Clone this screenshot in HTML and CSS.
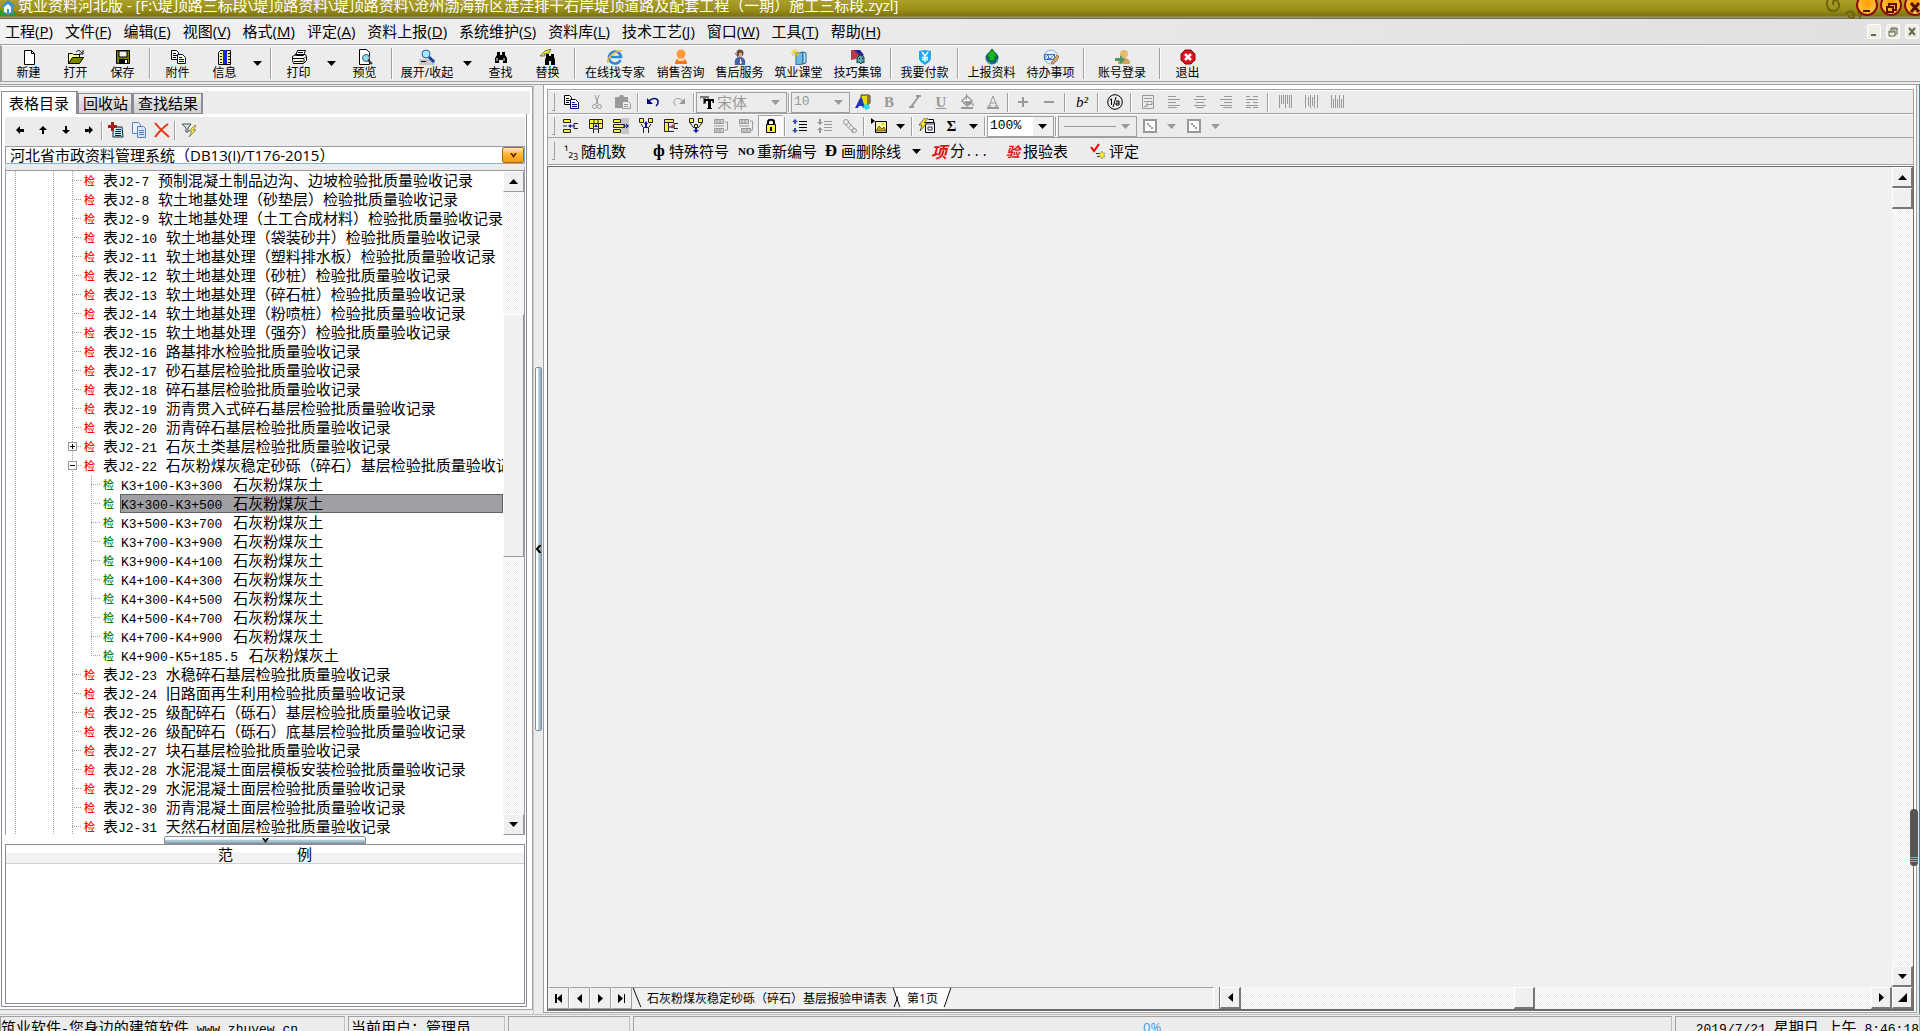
FILE: index.html
```html
<!DOCTYPE html>
<html lang="zh-CN">
<head>
<meta charset="utf-8">
<title>筑业资料河北版</title>
<link rel="stylesheet" href="styles.css">
</head>
<body>
<svg class="defs" aria-hidden="true">
  <symbol id="down" viewBox="0 0 9 5"><path d="M0 0h9L4.500 5z"/></symbol>
  <symbol id="up" viewBox="0 0 9 5"><path d="M0 5h9L4.500 0z"/></symbol>
  <symbol id="left" viewBox="0 0 5 9"><path d="M5 0v9L0 4.500z"/></symbol>
  <symbol id="right" viewBox="0 0 5 9"><path d="M0 0v9L5 4.500z"/></symbol>
  <symbol id="pages" viewBox="0 0 16 16"><path d="M1.500 1.500h5l2 2v7h-7z" fill="#fff" stroke="#000"/><path d="M3 4.500h3M3 6.500h4M3 8.500h3" stroke="#000"/><path d="M7.500 5.500h5l3 3v6h-8z" fill="#fff" stroke="#00007f"/><path d="M9 8.500h3M9 10.500h5M9 12.500h5" stroke="#00007f"/></symbol>
  <symbol id="pane" viewBox="0 0 16 16"><path d="M2 2h12v12H2z" fill="#fff" stroke="#999" stroke-width="2"/><path d="M5 5h2v2h2v2h2v2H9V9H7V7H5z" fill="#999"/></symbol>
</svg>

<header class="title">
  <svg class="logo" viewBox="0 0 16 16"><path d="M0 9l8 7 8-5v5H0z" fill="#2f9a35"/><path d="M1 7l7-7 7 6-2 1v6l-5 2-5-3V7z" fill="#3b8fd6"/><path d="M4 7l4-3 3 3v5l-2 1v-4H7v4l-3-1z" fill="#fff"/></svg>
  <h1>筑业资料河北版 - [F:\堤顶路三标段\堤顶路资料\堤顶路资料\沧州渤海新区涟洼排干右岸堤顶道路及配套工程（一期）施工三标段.zyzl]</h1>
  <svg class="swirl" viewBox="0 0 40 19" fill="none" stroke="#6c6412" stroke-width="2"><path d="M4 0c-3 4 0 11 5 11s8-5 5-9-7 0-4 3M22 14c2-4 8-3 8 1s-5 4-5 1M34 12c3 1 4 4 1 6"/></svg>
  <div class="winbtns">
    <button aria-label="最小化"><svg viewBox="0 0 12 12"><path d="M2 8h7v2H2z"/></svg></button>
    <button aria-label="还原"><svg viewBox="0 0 12 12" fill="none" stroke="#5a1200" stroke-width="2"><path d="M4 4V2h7v6H9M2 5h6v5H2z"/></svg></button>
    <button aria-label="关闭"><svg viewBox="0 0 12 12" fill="none" stroke="#5a1200" stroke-width="3"><path d="M2 1l8 9M10 1L2 10"/></svg></button>
  </div>
</header>

<nav class="menu">
  <a href="#">工程(<u>P</u>)</a><a href="#">文件(<u>F</u>)</a><a href="#">编辑(<u>E</u>)</a><a href="#">视图(<u>V</u>)</a><a href="#">格式(<u>M</u>)</a><a href="#">评定(<u>A</u>)</a><a href="#">资料上报(<u>D</u>)</a><a href="#">系统维护(<u>S</u>)</a><a href="#">资料库(<u>L</u>)</a><a href="#">技术工艺(<u>J</u>)</a><a href="#">窗口(<u>W</u>)</a><a href="#">工具(<u>T</u>)</a><a href="#">帮助(<u>H</u>)</a>
  <div class="mdi">
    <button aria-label="最小化文档"><svg viewBox="0 0 12 12"><path d="M3 8h5v2H3z"/></svg></button>
    <button aria-label="还原文档"><svg viewBox="0 0 12 12" fill="none" stroke="#666655"><path d="M4 4V2h6v6H8M2 5h6v5H2zM4 3h6M2 6h6"/></svg></button>
    <button aria-label="关闭文档"><svg viewBox="0 0 12 12" fill="none" stroke="#666655" stroke-width="2"><path d="M3 2l6 7M9 2L3 9"/></svg></button>
  </div>
</nav>

<div class="tools" role="toolbar">
  <button><svg viewBox="0 0 16 16"><path d="M3.500 1.500h7l3 3v11h-10z" fill="#fff" stroke="#000"/><path d="M10.500 1.500v3h3" fill="none" stroke="#000"/></svg>新建</button>
  <button><svg viewBox="0 0 16 16"><path d="M.5 14.500v-10h4l1 1h6v3" fill="#ffff9c" stroke="#000"/><path d="M.5 14.500l4-6h11l-4 6z" fill="#7f7f00" stroke="#000"/><path d="M8 3c2-2 4-2 6 1M15 1v4h-4" fill="none" stroke="#000"/></svg>打开</button>
  <button><svg viewBox="0 0 16 16"><path d="M1.500 1.500h13v13h-13z" fill="#7f7f00" stroke="#000"/><path d="M4 2h8v6H4z" fill="#eee" stroke="#000"/><path d="M4 10h9v5H4z"/><path d="M10 11h2v3h-2z" fill="#fff"/></svg>保存</button>
  <i class="sep"></i>
  <button><svg viewBox="0 0 16 16"><use href="#pages"/></svg>附件</button>
  <button><svg viewBox="0 0 16 16"><path d="M3.500 1.500h10v14h-12v-12z" fill="#ffff8a" stroke="#000"/><path d="M6 1h4v14H6z" fill="#1626e8"/><path d="M3 4.500h2M3 7.500h2M3 10.500h2M3 13.500h2M11 4.500h2M11 7.500h2M11 10.500h2M11 13.500h2" stroke="#000"/></svg>信息</button>
  <button class="drop" aria-label="信息选项"><svg><use href="#down"/></svg></button>
  <i class="sep"></i>
  <button><svg viewBox="0 0 16 16"><path d="M4.500 6.500l2-5h8l-2 5zM1.500 7.500l3-2h10l1 2v4l-3 3h-10l-1-3z" fill="#fff" stroke="#000"/><path d="M7 3.500h5M6 5.500h5M1 9.500h12M3 12.500h9M13 9.500l2-2M13 10v4" stroke="#000"/><path d="M9 11h2v1H9z" fill="#dd0"/></svg>打印</button>
  <button class="drop" aria-label="打印选项"><svg><use href="#down"/></svg></button>
  <button><svg viewBox="0 0 16 16"><path d="M2.500 15.500v-15h7l3 3v12z" fill="#fff" stroke="#000"/><circle cx="9" cy="9" r="3.500" fill="#8fdcf0" stroke="#556"/><path d="M11 11l4 4" stroke="#333" stroke-width="2"/></svg>预览</button>
  <i class="sep"></i>
  <button class="w62"><svg viewBox="0 0 16 16"><path d="M0 10h16v6H0z" fill="#c8c8c8"/><path d="M2 12.500h5" stroke="#000"/><circle cx="7" cy="5" r="4" fill="#a4e6ff" stroke="#27629c" stroke-width="1"/><path d="M10 8l5 5" stroke="#15459a" stroke-width="3"/></svg>展开/收起</button>
  <button class="drop" aria-label="展开选项"><svg><use href="#down"/></svg></button>
  <button><svg viewBox="0 0 16 16"><path d="M4 3h3v3h2V3h3v3l2 3v5h-4v-3H6v3H2V9l2-3z"/><path d="M4 9v3M11 9v3" stroke="#fff"/></svg>查找</button>
  <button><svg viewBox="0 0 16 16"><path d="M6 5h3v2h2V5h3v3l1 3v5h-4v-4H9v4H5v-5l1-3z"/><path d="M0 7l5-5 6-2-2 4-5 1 1 2z" fill="#f3ec1f" stroke="#332" stroke-width=".6"/></svg>替换</button>
  <i class="sep"></i>
  <button class="w72"><svg viewBox="0 0 16 16"><path d="M13.500 11A6 6 0 1 1 14 8H4" fill="none" stroke="#2f86dd" stroke-width="2.600"/><path d="M1 14C-1 9 10 0 15 2" fill="none" stroke="#e9b730" stroke-width="1.500"/></svg>在线找专家</button>
  <button class="w59"><svg viewBox="0 0 16 16"><circle cx="8" cy="5" r="4.500" fill="#ff9a3d"/><path d="M2 15c0-5 3-6 6-5 4-1 6 1 6 5z" fill="#f47521"/><path d="M5 11h6" stroke="#ffd7a8" stroke-width="2"/></svg>销售咨询</button>
  <button class="w59"><svg viewBox="0 0 16 16"><circle cx="8" cy="4" r="3.500" fill="#6e4c3f"/><path d="M7 4h3v4H7z" fill="#dba78b"/><path d="M3 16c-1-6 1-8 5-8s6 3 5 8z" fill="#4961a8"/><path d="M8 9l2 5-2 1z" fill="#fff"/><path d="M3 4l3 4" stroke="#667"/></svg>售后服务</button>
  <button class="w59"><svg viewBox="0 0 16 16"><path d="M5 4l7-1v12l-7 1z" fill="#6fb8e2" stroke="#276d9d"/><path d="M12 3l3 1v10l-3 1z" fill="#b7def2" stroke="#276d9d"/><path d="M4 0v9M0 4h9M1 1l6 6M7 1L1 7" stroke="#f1c31b"/></svg>筑业课堂</button>
  <button class="w59"><svg viewBox="0 0 16 16"><path d="M1 1h7l3 4-5 5-5 1z" fill="#b83b46"/><path d="M4 1h6l4 5-3 2z" fill="#2a2190"/><path d="M7 14V9l3-3 4 2v6l-2-1-1 2-2-2z" fill="#59a8b5" stroke="#144" /><path d="M9 9h1v1H9zM12 9h1v1h-1z"/></svg>技巧集锦</button>
  <i class="sep"></i>
  <button class="w59"><svg viewBox="0 0 16 16"><path d="M2 2l6-1 6 1v7c0 3-3 5-6 7-3-2-6-4-6-7z" fill="#28a3ec"/><path d="M5 3l3 4 3-4M8 7v6M5 8.500h6M5 10.500h6" stroke="#fff" stroke-width="1.400" fill="none"/></svg>我要付款</button>
  <i class="sep"></i>
  <button class="w59"><svg viewBox="0 0 16 16"><circle cx="8" cy="9" r="6.500" fill="#2364b8"/><path d="M2 8l6-8 6 8h-3v4H5V8z" fill="#19b52b" stroke="#075b12"/><path d="M3 12l3 1v3zM12 12l2-1-1 4z" fill="#40bd50"/></svg>上报资料</button>
  <button class="w59"><svg viewBox="0 0 16 16"><circle cx="8" cy="8" r="7" fill="#e4eefb" stroke="#8caad4"/><path d="M1 5h11v6H1z" fill="#3576c8"/><path d="M3 6v4l2-2zM6 6l1 3 1-3M9 6v4l2-2z" fill="none" stroke="#fff"/><path d="M8 14l6-8 2 2-6 7z" fill="#f0a54c" stroke="#875"/></svg>待办事项</button>
  <i class="sep"></i>
  <button class="w68"><svg viewBox="0 0 16 16"><circle cx="10" cy="5" r="4" fill="#e6bd70"/><path d="M4 15c0-5 2-6 6-6s6 2 6 6z" fill="#cda45a"/><path d="M1 9h5V6l5 5-5 4v-3H1z" fill="#4f9463"/></svg>账号登录</button>
  <i class="sep"></i>
  <button><svg viewBox="0 0 16 16"><path d="M5 1h6l4 4v6l-4 4H5l-4-4V5z" fill="#d8131b" stroke="#8d0910"/><path d="M5 5l6 6M11 5l-6 6" stroke="#fff" stroke-width="2.500"/></svg>退出</button>
</div>

<main>
  <aside>
    <div class="tabs" role="tablist">
      <button class="tab on" role="tab">表格目录</button><button class="tab" role="tab">回收站</button><button class="tab" role="tab">查找结果</button>
    </div>
    <div class="page">
      <div class="treebar" role="toolbar">
        <button aria-label="左移"><svg viewBox="0 0 16 16"><path d="M4 8l4-4v3h4v3H8v2z"/></svg></button>
        <button aria-label="上移"><svg viewBox="0 0 16 16"><path d="M8 4l4 4H9v4H7V8H4z"/></svg></button>
        <button aria-label="下移"><svg viewBox="0 0 16 16"><path d="M8 12l4-4H9V4H7v4H4z"/></svg></button>
        <button aria-label="右移"><svg viewBox="0 0 16 16"><path d="M12 8L8 4v3H4v3h4v2z"/></svg></button>
        <i class="vsep"></i>
        <button aria-label="添加"><svg viewBox="0 0 16 16"><path d="M5 5h9l1 10H5z" fill="#bdeef5" stroke="#123"/><path d="M8 7.500h5M7 9.500h6M7 11.500h6M7 13.500h6" stroke="#123"/><path d="M0 3h3V0h3v3h3v3H6v3H3V6H0z" fill="#a51f14"/></svg></button>
        <button aria-label="复制"><svg viewBox="0 0 16 16" stroke="#5b7fc0"><path d="M1.500.5h6l2 2v9h-8z" fill="#eaf2ff"/><path d="M6.500 4.500h6l2 2v9h-8z" fill="#d6e5ff"/><path d="M8 8.500h5M8 10.500h5M8 12.500h5"/></svg></button>
        <button aria-label="删除"><svg viewBox="0 0 16 16" fill="none" stroke="#e8330c" stroke-width="2"><path d="M1 1c4 5 8 9 14 14M14 2C8 6 5 10 1 15"/></svg></button>
        <i class="vsep"></i>
        <button aria-label="筛选"><svg viewBox="0 0 16 16"><path d="M1 2h9L7 6v4H5V6z" fill="#cfe0dd" stroke="#455"/><path d="M14 3l-6 6h3l-3 6 7-7h-3l3-4z" fill="#ffef3a" stroke="#665" stroke-width=".7"/></svg></button>
      </div>
      <div class="syscombo">
        <select aria-label="资料系统"><option>河北省市政资料管理系统（DB13(I)/T176-2015）</option></select>
        <span class="knob"><svg viewBox="0 0 7 5"><path d="M0 0h2l1.500 2L5 0h2L3.500 5z" fill="#6b2000"/></svg></span>
      </div>
      <div class="treebox">
        <ul class="tree">
          <li><div><b>检</b><span>表<code>J2-7 </code>预制混凝土制品边沟、边坡检验批质量验收记录</span></div></li>
          <li><div><b>检</b><span>表<code>J2-8 </code>软土地基处理（砂垫层）检验批质量验收记录</span></div></li>
          <li><div><b>检</b><span>表<code>J2-9 </code>软土地基处理（土工合成材料）检验批质量验收记录</span></div></li>
          <li><div><b>检</b><span>表<code>J2-10 </code>软土地基处理（袋装砂井）检验批质量验收记录</span></div></li>
          <li><div><b>检</b><span>表<code>J2-11 </code>软土地基处理（塑料排水板）检验批质量验收记录</span></div></li>
          <li><div><b>检</b><span>表<code>J2-12 </code>软土地基处理（砂桩）检验批质量验收记录</span></div></li>
          <li><div><b>检</b><span>表<code>J2-13 </code>软土地基处理（碎石桩）检验批质量验收记录</span></div></li>
          <li><div><b>检</b><span>表<code>J2-14 </code>软土地基处理（粉喷桩）检验批质量验收记录</span></div></li>
          <li><div><b>检</b><span>表<code>J2-15 </code>软土地基处理（强夯）检验批质量验收记录</span></div></li>
          <li><div><b>检</b><span>表<code>J2-16 </code>路基排水检验批质量验收记录</span></div></li>
          <li><div><b>检</b><span>表<code>J2-17 </code>砂石基层检验批质量验收记录</span></div></li>
          <li><div><b>检</b><span>表<code>J2-18 </code>碎石基层检验批质量验收记录</span></div></li>
          <li><div><b>检</b><span>表<code>J2-19 </code>沥青贯入式碎石基层检验批质量验收记录</span></div></li>
          <li><div><b>检</b><span>表<code>J2-20 </code>沥青碎石基层检验批质量验收记录</span></div></li>
          <li><div><button class="fold" aria-label="展开"><svg viewBox="0 0 9 9"><path d="M2 4.500h5M4.500 2v5" stroke="#000"/></svg></button><b>检</b><span>表<code>J2-21 </code>石灰土类基层检验批质量验收记录</span></div></li>
          <li><div><button class="fold" aria-label="收起"><svg viewBox="0 0 9 9"><path d="M2 4.500h5" stroke="#000"/></svg></button><b>检</b><span>表<code>J2-22 </code>石灰粉煤灰稳定砂砾（碎石）基层检验批质量验收记录</span></div>
            <ul>
              <li><div><b>检</b><span><code>K3+100-K3+300 </code>石灰粉煤灰土</span></div></li>
              <li><div><b>检</b><span class="sel"><code>K3+300-K3+500 </code>石灰粉煤灰土</span></div></li>
              <li><div><b>检</b><span><code>K3+500-K3+700 </code>石灰粉煤灰土</span></div></li>
              <li><div><b>检</b><span><code>K3+700-K3+900 </code>石灰粉煤灰土</span></div></li>
              <li><div><b>检</b><span><code>K3+900-K4+100 </code>石灰粉煤灰土</span></div></li>
              <li><div><b>检</b><span><code>K4+100-K4+300 </code>石灰粉煤灰土</span></div></li>
              <li><div><b>检</b><span><code>K4+300-K4+500 </code>石灰粉煤灰土</span></div></li>
              <li><div><b>检</b><span><code>K4+500-K4+700 </code>石灰粉煤灰土</span></div></li>
              <li><div><b>检</b><span><code>K4+700-K4+900 </code>石灰粉煤灰土</span></div></li>
              <li><div><b>检</b><span><code>K4+900-K5+185.5 </code>石灰粉煤灰土</span></div></li>
            </ul>
          </li>
          <li><div><b>检</b><span>表<code>J2-23 </code>水稳碎石基层检验批质量验收记录</span></div></li>
          <li><div><b>检</b><span>表<code>J2-24 </code>旧路面再生利用检验批质量验收记录</span></div></li>
          <li><div><b>检</b><span>表<code>J2-25 </code>级配碎石（砾石）基层检验批质量验收记录</span></div></li>
          <li><div><b>检</b><span>表<code>J2-26 </code>级配碎石（砾石）底基层检验批质量验收记录</span></div></li>
          <li><div><b>检</b><span>表<code>J2-27 </code>块石基层检验批质量验收记录</span></div></li>
          <li><div><b>检</b><span>表<code>J2-28 </code>水泥混凝土面层模板安装检验批质量验收记录</span></div></li>
          <li><div><b>检</b><span>表<code>J2-29 </code>水泥混凝土面层检验批质量验收记录</span></div></li>
          <li><div><b>检</b><span>表<code>J2-30 </code>沥青混凝土面层检验批质量验收记录</span></div></li>
          <li><div><b>检</b><span>表<code>J2-31 </code>天然石材面层检验批质量验收记录</span></div></li>
        </ul>
        <div class="vbar flat">
          <button aria-label="向上滚动"><svg><use href="#up"/></svg></button>
          <i class="before"></i><i class="thumb"></i><i class="after"></i>
          <button aria-label="向下滚动"><svg><use href="#down"/></svg></button>
        </div>
      </div>
      <div class="hsplit"><button aria-label="收起范例"><svg viewBox="0 0 7 5"><path d="M0 0h2l1.500 2L5 0h2L3.500 5z"/></svg></button></div>
      <section class="sample"><h2><span>范</span><span>例</span></h2></section>
    </div>
  </aside>

  <div class="vsplit"><button aria-label="收起目录"><svg viewBox="0 0 5 8"><path d="M4.500 0L1 4l3.500 4" fill="none" stroke="#000" stroke-width="2"/></svg></button></div>

  <section class="work">
    <div class="bars">
      <div class="bar" role="toolbar">
        <i class="grip"></i>
        <button aria-label="复制"><svg viewBox="0 0 16 16"><use href="#pages"/></svg></button>
        <button aria-label="剪切"><svg viewBox="0 0 16 16" fill="none" stroke="#999"><path d="M6 1l3 9M10 1L7 10"/><circle cx="5.500" cy="12.500" r="2"/><circle cx="10.500" cy="12.500" r="2"/></svg></button>
        <button aria-label="粘贴"><svg viewBox="0 0 16 16"><path d="M0 3h4l1-2h3l1 2h4v11H0z" fill="#999"/><path d="M7.500 7.500h6l2 2v5h-8z" fill="#eee" stroke="#999"/><path d="M9 10.500h4M9 12.500h4" stroke="#999"/></svg></button>
        <i class="vsep"></i>
        <button aria-label="撤销"><svg viewBox="0 0 16 16"><path d="M2 4v6h6z" fill="#00007f"/><path d="M4 7c4-4 10-3 9 2 0 1-1 2-2 3" fill="none" stroke="#00007f" stroke-width="1.500"/></svg></button>
        <button aria-label="重做"><svg viewBox="0 0 16 16"><path d="M14 4v6H8z" fill="#999"/><path d="M12 7C8 3 2 4 3 9c0 1 1 2 2 3" fill="none" stroke="#999"/></svg></button>
        <i class="vsep"></i>
        <label class="combo font"><svg class="ico" viewBox="0 0 16 16"><path d="M1 2h9v4H9L8 4H7v6H4V4H2L1 6z" fill="#777"/><path d="M5 5h10v4h-1l-1-2h-1v7h1v1H8v-1h1V7H7L6 9H5z"/></svg><select aria-label="字体" disabled><option>宋体</option></select><svg class="arr"><use href="#down"/></svg></label>
        <i class="vsep"></i>
        <label class="combo size"><select aria-label="字号" disabled><option>10</option></select><svg class="arr"><use href="#down"/></svg></label>
        <button aria-label="颜色"><svg viewBox="0 0 16 16"><path d="M6 1h8l1 1v7l-4 3-5-2z" fill="#e9d71c" stroke="#332"/><path d="M12 2v9l3-2V2z" fill="#8a7d10"/><path d="M5 4L0 14h3l1-2h3l1 2h2L7 4z" fill="#2238b4"/><path d="M10 10l4 1 1 3-4 2-3-3z" fill="#2cdde8"/></svg></button>
        <button class="dim serif" aria-label="粗体"><strong>B</strong></button>
        <button aria-label="斜体"><svg viewBox="0 0 16 16" stroke="#999" stroke-width="2"><path d="M12 2L4 13M9 2h5M2 13h5"/></svg></button>
        <button class="dim serif" aria-label="下划线"><strong><u>U</u></strong></button>
        <button aria-label="填充"><svg viewBox="0 0 16 16"><path d="M3 7l5-5 5 5-5 5z" fill="#fff" stroke="#999" stroke-width="1.500"/><path d="M5 7h8v3l-5 2z" fill="#999"/><path d="M2 13h12v2H2zM14 8l1 4h-2zM7 0h1v6H7z" fill="#999"/></svg></button>
        <button aria-label="字色"><svg viewBox="0 0 16 16" fill="none" stroke="#999"><path d="M4 12L8 2l4 10M5 9h6M2.500 12h4M9.500 12h4"/><path d="M2 14h12" stroke-width="2"/></svg></button>
        <i class="vsep"></i>
        <button aria-label="增大"><svg viewBox="0 0 16 16"><path d="M7 3h2v4h4v2H9v4H7V9H3V7h4z" fill="#999"/></svg></button>
        <button aria-label="减小"><svg viewBox="0 0 16 16"><path d="M3 7h10v2H3z" fill="#999"/></svg></button>
        <i class="vsep wide"></i>
        <button class="serif" aria-label="上标"><em>b²</em></button>
        <i class="vsep wide"></i>
        <button aria-label="分数"><svg viewBox="0 0 16 16" fill="none" stroke="#000"><circle cx="8" cy="8" r="7.300"/><path d="M3 6l1.500-1v6M9 3l-3 10M9 7h3v4H9V9h3"/></svg></button>
        <i class="vsep wide"></i>
        <button aria-label="换行"><svg viewBox="0 0 16 16" fill="none" stroke="#999"><path d="M2.500 1.500h11v13h-11zM4 4.500h8M4 7.500h8v3H7M4 12.500h3M8 9l-2 1.500L8 12"/></svg></button>
        <button aria-label="左对齐"><svg viewBox="0 0 16 16" stroke="#999"><path d="M2 2.500h8M2 5.500h12M2 8.500h8M2 11.500h12M2 13.500h9"/></svg></button>
        <button aria-label="居中"><svg viewBox="0 0 16 16" stroke="#999"><path d="M4 2.500h8M2 5.500h12M4 8.500h8M2 11.500h12M4 13.500h8"/></svg></button>
        <button aria-label="右对齐"><svg viewBox="0 0 16 16" stroke="#999"><path d="M6 2.500h8M2 5.500h12M6 8.500h8M2 11.500h12M5 13.500h9"/></svg></button>
        <button aria-label="分散"><svg viewBox="0 0 16 16" stroke="#999"><path d="M2 2.500h4M9 2.500h5M2 5.500h12M2 8.500h4M9 8.500h5M2 11.500h12M2 13.500h5M9 13.500h5"/></svg></button>
        <i class="vsep wide"></i>
        <button aria-label="顶对齐"><svg viewBox="0 0 16 16" stroke="#999"><path d="M2.500 1v13M4.500 1v9M6.500 1v9M8.500 1v13M10.500 1v9M12.500 1v13M14.500 1v13"/></svg></button>
        <button aria-label="垂直居中"><svg viewBox="0 0 16 16" stroke="#999"><path d="M2.500 1v13M5.500 3v9M7.500 1v13M9.500 3v9M11.500 1v13M14.500 1v13"/></svg></button>
        <button aria-label="底对齐"><svg viewBox="0 0 16 16" stroke="#999"><path d="M2.500 1v13M4.500 5v9M6.500 1v13M8.500 5v9M10.500 1v13M12.500 5v9M14.500 1v13"/></svg></button>
      </div>

      <div class="bar tight" role="toolbar">
        <i class="grip"></i>
        <button aria-label="插入行"><svg viewBox="0 0 16 16"><path d="M.5 1.500h7v3h-7zM.5 11.500h7v3h-7z" fill="#fff33a" stroke="#222"/><path d="M0 8h4M15 5.500h-4v5h4" stroke="#222" fill="none"/><path d="M5 8l3-2v1.500h4v1H8V10z" fill="#1212a0"/></svg></button>
        <button aria-label="插入格"><svg viewBox="0 0 16 16"><path d="M1.500 1.500h13v4h-13zM1.500 5.500h4v5h-4zM10.500 5.500h4v5h-4z" fill="#fff33a" stroke="#222"/><path d="M6 1v4M10 1v4M5.500 15v-4h5v4" stroke="#222" fill="none"/><path d="M8 6l2 3H6z" fill="#1212a0"/></svg></button>
        <button aria-label="追加行"><svg viewBox="0 0 16 16"><path d="M8 0h8v16H8z" fill="#c6c6c6"/><path d="M.5 1.500h7v3h-7zM.5 6.500h11v3H.5zM.5 11.500h7v3h-7z" fill="#fff33a" stroke="#222"/><path d="M16 8l-3-2.500v5zM10 7.500h4v1h-4z" fill="#1212a0"/></svg></button>
        <button aria-label="插入列"><svg viewBox="0 0 16 16"><path d="M1.500.5h4v4h-4zM10.500.5h4v4h-4z" fill="#fff33a" stroke="#222"/><path d="M5.500 15V9.500h5V15M3 6l2 3M13 6l-2 3" stroke="#222" fill="none"/><path d="M8 3l2 3H9v3H7V6H6z" fill="#1212a0"/></svg></button>
        <button aria-label="删除列"><svg viewBox="0 0 16 16"><path d="M1.500 1.500h9v3h-9zM1.500 4.500h4v9h-4z" fill="#fff33a" stroke="#222"/><path d="M6 13.500h5M15 5.500h-4v5h4M5.500 9h6" stroke="#222" fill="none"/><path d="M7 8.500l3-2v4z" fill="#d03030"/></svg></button>
        <button aria-label="追加列"><svg viewBox="0 0 16 16"><path d="M1.500.5h4v4h-4zM10.500.5h4v4h-4zM6.500 6.500h3v3h-3z" fill="#fff33a" stroke="#222"/><path d="M2 5l4 5M14 5l-4 5" stroke="#222"/><path d="M8 15l-3-3h2v-3h2v3h2z" fill="#1212a0"/></svg></button>
        <button aria-label="合并"><svg viewBox="0 0 16 16" fill="#ccc" stroke="#999"><path d="M1.500 1.500h9v4h-9zM1.500 10.500h9v4h-9z"/><path d="M1 8h10M12 4h2.500v8H12M4 1v5M7 1v5M4 10v5M7 10v5" fill="none"/></svg></button>
        <button aria-label="拆分"><svg viewBox="0 0 16 16" fill="#ccc" stroke="#999"><path d="M1.500 1.500h9v4h-9zM3.500 10.500h9v4h-9z"/><path d="M1 8h10M12 3h2.500v9H12M4 1v5M7 1v5M6 10v5M9 10v5" fill="none"/></svg></button>
        <button class="pressed" aria-label="锁定"><svg viewBox="0 0 16 16"><path d="M5 7V4c0-3 6-3 6 0v3" fill="none" stroke="#000" stroke-width="2"/><path d="M3.500 6.500h9v8h-9z" fill="#fff33a" stroke="#000"/><path d="M7 9h2v4H7z"/></svg></button>
        <i class="vsep"></i>
        <button aria-label="行距增大"><svg viewBox="0 0 16 16"><path d="M7 3.500h8M7 6.500h8M7 9.500h8M7 12.500h8" stroke="#000"/><path d="M3 1l3 3H4v2H2V4H0zM3 15l3-3H4v-2H2v2H0z" fill="#3449a8"/></svg></button>
        <button aria-label="行距减小"><svg viewBox="0 0 16 16"><path d="M7 3.500h8M7 6.500h8M7 9.500h8M7 12.500h8" stroke="#999"/><path d="M3 7L0 4h2V1h2v3h2zM3 9l3 3H4v3H2v-3H0z" fill="#999"/></svg></button>
        <button aria-label="清除"><svg viewBox="0 0 16 16" fill="none" stroke="#999"><circle cx="4" cy="4" r="2.500"/><path d="M6 4l8 8M4 7l7 8M7 9l3-2M9 12l3-2"/><circle cx="12.500" cy="12.500" r="2"/></svg></button>
        <i class="vsep"></i>
        <button aria-label="图片"><svg viewBox="0 0 16 16"><path d="M4.500 3.500h11v11h-11z" fill="#fffbb0" stroke="#000"/><path d="M5 13l3-5 3 3 2-2 2 4z" fill="#c9a400" stroke="#332" stroke-width=".7"/><circle cx="12" cy="6" r="1.500" fill="#e6d200"/><path d="M0 0l4 3-4 3z"/></svg></button>
        <button class="drop" aria-label="图片选项"><svg><use href="#down"/></svg></button>
        <i class="vsep"></i>
        <button aria-label="公式"><svg viewBox="0 0 16 16"><path d="M6.500 4.500h9v10h-9zM9.500 1.500h5v3" fill="#fff" stroke="#000"/><path d="M6 6h9M9 9h4v3H9z" fill="none" stroke="#224"/><path d="M6 0L0 7h3l-2 6 7-8H5l4-5z" fill="#ffee22" stroke="#443" stroke-width=".8"/></svg></button>
        <button class="serif" aria-label="求和"><strong>Σ</strong></button>
        <button class="drop" aria-label="求和选项"><svg><use href="#down"/></svg></button>
        <i class="vsep"></i>
        <label class="combo zoom"><select aria-label="缩放"><option>100%</option></select><svg class="arr"><use href="#down"/></svg></label>
        <i class="vsep"></i>
        <label class="combo line"><select aria-label="线型" disabled><option></option></select><svg class="arr"><use href="#down"/></svg></label>
        <button aria-label="边框"><svg viewBox="0 0 16 16"><use href="#pane"/></svg></button>
        <button class="drop dim" aria-label="边框选项"><svg><use href="#down"/></svg></button>
        <button aria-label="斜线"><svg viewBox="0 0 16 16"><use href="#pane"/></svg></button>
        <button class="drop dim" aria-label="斜线选项"><svg><use href="#down"/></svg></button>
      </div>

      <div class="bar named" role="toolbar">
        <i class="grip"></i>
        <button class="n1"><span class="frac">¹₂<sub>3</sub></span>随机数</button>
        <button class="n2"><span class="sym">ф</span>特殊符号</button>
        <button class="n3"><span class="no">NO</span>重新编号</button>
        <button class="n4"><span class="sym">Đ</span>画删除线</button>
        <button class="drop" aria-label="删除线选项"><svg><use href="#down"/></svg></button>
        <button class="n5"><span class="red big">项</span><span>分<code>...</code></span></button>
        <button class="n6"><span class="red">验</span>报验表</button>
        <button class="n7"><svg viewBox="0 0 16 16"><path d="M1 4l3 4 5-7" fill="none" stroke="#e00" stroke-width="2"/><path d="M6 10.500h5M7 13.500h4" stroke="#222"/><path d="M12 8l1 2 2 0-1 2 1 2h-2l-1 2-1-2H9l1-2-1-2h2z" fill="#f8ea1c" stroke="#776" stroke-width=".5"/></svg>评定</button>
      </div>
    </div>

    <div class="sheet">
      <div class="canvas"></div>
      <div class="vbar">
        <button aria-label="向上滚动"><svg><use href="#up"/></svg></button>
        <i class="thumb"></i><i class="after"></i>
        <button aria-label="向下滚动"><svg><use href="#down"/></svg></button>
      </div>
      <div class="foot">
        <div class="pager">
          <button aria-label="首页"><svg viewBox="0 0 9 9"><path d="M1 0h2v9H1zM8 0v9L3 4.500z"/></svg></button>
          <button aria-label="上一页"><svg viewBox="0 0 9 9"><path d="M7 0v9L2 4.500z"/></svg></button>
          <button aria-label="下一页"><svg viewBox="0 0 9 9"><path d="M2 0v9l5-4.500z"/></svg></button>
          <button aria-label="末页"><svg viewBox="0 0 9 9"><path d="M1 0v9l5-4.500zM7 0h1v9H7z"/></svg></button>
        </div>
        <div class="sheettabs" role="tablist">
          <svg viewBox="0 0 10 22"><path d="M1 1l8 20" stroke="#000"/></svg>
          <button role="tab">石灰粉煤灰稳定砂砾（碎石）基层报验申请表</button>
          <svg viewBox="0 0 10 22"><path d="M0 1h10v20H8z" fill="#fff"/><path d="M1 1l7 20M6 10L2 21" stroke="#000"/></svg>
          <button class="on" role="tab">第1页</button>
          <svg viewBox="0 0 10 22"><path d="M0 1h8L1 21H0z" fill="#fff"/><path d="M8 1L1 21" stroke="#000"/></svg>
        </div>
        <div class="hbar">
          <button aria-label="向左滚动"><svg><use href="#left"/></svg></button>
          <i class="before"></i><i class="thumb"></i><i class="after"></i>
          <button aria-label="向右滚动"><svg><use href="#right"/></svg></button>
        </div>
      </div>
      <button class="corner" aria-label="调整大小"><svg viewBox="0 0 9 9"><path d="M9 0v9H0z"/></svg></button>
    </div>
  </section>
  <i class="floatbar"></i>
</main>

<footer>
  <div class="s1">筑业软件<code>-</code>您身边的建筑软件<code> www.zhuyew.cn</code></div>
  <div class="s2">当前用户：管理员</div>
  <div class="s3"></div>
  <div class="s4">0%</div>
  <div class="s5"><code>2019/7/21 </code>星期日<code> </code>上午<code> 8:46:18</code></div>
</footer>
</body>
</html>
```

FILE: styles.css
```css
* { box-sizing: border-box; }
html, body { height: 100%; margin: 0; }
body {
  display: flex;
  flex-direction: column;
  overflow: hidden;
  background: #ececec;
  color: #000;
  font: 15px/19px "Open Sans", "Noto Sans CJK SC", sans-serif;
}
button, select { font: inherit; color: inherit; margin: 0; padding: 0; border: 0; background: none; }
button svg { display: block; }
i { font-style: normal; flex: none; }
code { font: 13px/19px "Liberation Mono", monospace; white-space: pre; }
.defs { position: absolute; width: 0; height: 0; }

/* Title bar */
.title {
  display: flex;
  flex: none;
  height: 19px;
  overflow: hidden;
  background: linear-gradient(#aaa02b, #9a9018 50%, #7c7210 85%, #a8a48c 90%, #5e5a34);
}
.logo { width: 16px; height: 16px; flex: none; }
.title h1 { flex: 1; margin: 0 0 0 2px; font-size: 15px; font-weight: 400; line-height: 11px; color: #fff; white-space: nowrap; }
.swirl { width: 40px; height: 19px; flex: none; margin-right: -8px; }
.winbtns { display: flex; gap: 2px; margin: -6px -6px 0 0; position: relative; }
.winbtns button { width: 22px; height: 22px; border: 2px solid #8d0c00; border-radius: 50%; background: radial-gradient(circle at 50% 40%, #ff9c00, #ffd45a); }
.winbtns svg { width: 12px; height: 12px; margin: 5px 3px 0; fill: #5a1200; }
.winbtns svg[fill] { fill: none; }

/* Menu */
.menu {
  display: flex;
  flex: none;
  gap: 12px;
  height: 26px;
  padding-left: 5px;
  border-bottom: 1px solid #a0a0a0;
  line-height: 24px;
  background: linear-gradient(90deg, #f2f2f2, #e0e0e0);
}
.menu a { color: inherit; text-decoration: none; white-space: nowrap; }
.mdi { display: flex; gap: 5px; margin: 5px 1px 0 auto; }
.mdi button { width: 14px; height: 15px; border: 1px solid #fff; border-radius: 2px; background: #eeeee2; }
.mdi svg { width: 12px; height: 12px; fill: #666655; }
.mdi svg[fill] { fill: none; }

/* Main toolbar */
.tools {
  display: flex;
  flex: none;
  height: 37px;
  padding-left: 3px;
  border-top: 1px solid #fff;
  border-left: 2px solid #a0a0a0;
  border-bottom: 1px solid #a0a0a0;
  font-size: 12px;
  line-height: 15px;
}
.tools button { display: flex; flex-direction: column; align-items: center; width: 47px; padding-top: 3px; white-space: nowrap; }
.tools button svg { width: 16px; height: 16px; }
.tools .w59 { width: 59px; }
.tools .w62 { width: 62px; }
.tools .w68 { width: 68px; }
.tools .w72 { width: 72px; }
.tools .drop { width: 19px; padding-top: 15px; }
.tools .drop svg { width: 9px; height: 5px; }
.sep { width: 2px; height: 31px; margin: 2px 3px; border-left: 1px solid #a0a0a0; border-right: 1px solid #fff; }
.vsep { width: 2px; height: 19px; margin: 0 1px; border-left: 1px solid #a0a0a0; border-right: 1px solid #fff; }
.vsep.wide { margin: 0 3px 0 2px; }

/* Two panes */
main { flex: 1; min-height: 0; display: flex; margin-top: 2px; padding-right: 2px; position: relative; background: linear-gradient(#a0a0a0 1px, #ececec 1px); border-right: 1px solid #3a86b8; }
aside { flex: none; width: 533px; display: flex; flex-direction: column; margin: 2px 0 4px; padding: 4px 2px 2px 1px; border: 1px solid #a0a0a0; border-left: 0; background: #fff; }

.tabs { display: flex; align-items: flex-end; height: 23px; margin-bottom: -1px; background: #ececec; position: relative; }
.tab { height: 21px; padding: 0 3px 0 4px; border: 1px solid #8b8d96; border-width: 1px 2px 1px 1px; line-height: 19px; background: linear-gradient(#f3f3f3, #dcdcdc 50%, #cfcfcf); }
.tab.on { height: 23px; padding: 0 7px; border-bottom: 0; background: #fff; }

.page { flex: 1; min-height: 0; display: flex; flex-direction: column; margin-right: 3px; padding: 3px 1px 2px 3px; border: 1px solid #8b8d96; }
.treebar { display: flex; flex: none; align-items: center; height: 29px; padding: 0 0 3px 3px; background: #ececec; }
.treebar button { width: 23px; display: grid; place-items: center; }
.treebar svg { width: 16px; height: 16px; }
.syscombo { display: flex; flex: none; height: 18px; border: 1px solid #9a9aa2; border-right-color: #7fb4df; border-bottom-color: #7fb4df; }
.syscombo select { flex: 1; min-width: 0; padding-left: 4px; appearance: none; line-height: 16px; background: #fff; }
.knob { width: 22px; display: grid; place-items: center; border: 1px solid #a06a10; border-radius: 2px; background: linear-gradient(#ffe9a8, #ffb62e 45%, #f79a10); }
.knob svg { width: 7px; height: 5px; }

.treebox { flex: 1; min-height: 0; display: flex; overflow: hidden; border-left: 1px solid #9a9aa2; border-right: 1px solid #9a9aa2; border-top: 6px solid #ececec; }
.tree {
  flex: 1;
  min-width: 0;
  margin: 0;
  padding: 0;
  overflow: hidden;
  list-style: none;
  border-top: 1px solid #9a9aa2;
  background:
    repeating-linear-gradient(#a0a0a0 0 1px, #fff 1px 2px) 9px 0 / 1px 100% no-repeat,
    repeating-linear-gradient(#a0a0a0 0 1px, #fff 1px 2px) 47px 0 / 1px 100% no-repeat,
    repeating-linear-gradient(#a0a0a0 0 1px, #fff 1px 2px) 66px 0 / 1px 100% no-repeat,
    #fff;
}
.tree ul { margin: 0; padding: 0; list-style: none; background: repeating-linear-gradient(#a0a0a0 0 1px, transparent 1px 2px) 85px 0 / 1px 181px no-repeat; }
.tree div {
  display: flex;
  align-items: center;
  height: 19px;
  padding-left: 78px;
  background: repeating-linear-gradient(90deg, #a0a0a0 0 1px, transparent 1px 2px) 66px 9px / 10px 1px no-repeat;
}
.tree b { flex: none; width: 19px; color: #f00; font-size: 11px; font-weight: 500; }
.tree span { flex: 1; height: 19px; line-height: 18px; overflow: hidden; white-space: nowrap; }
.tree code { margin-right: 1px; }
.tree ul div { padding-left: 97px; background-position: 85px 9px; }
.tree ul b { width: 17px; color: #008000; }
.tree ul span { border: 1px solid transparent; line-height: 16px; }
.tree ul code { margin-right: 3px; }
.tree ul .sel { border-color: #636363; background: #a09fa3; }
.fold { flex: none; width: 9px; height: 9px; margin: 0 7px 0 -16px; background: #fff; outline: 1px solid #9a9a9a; outline-offset: -1px; }
.fold svg { width: 9px; height: 9px; }

/* Scroll bars */
.vbar, .hbar { display: flex; background: repeating-conic-gradient(#fff 0 25%, #ececec 0 50%) 0 0 / 2px 2px; }
.vbar { width: 21px; flex-direction: column; }
.vbar button, .hbar button, .corner, .thumb { flex: none; display: grid; place-items: center; border: 1px solid #fff; border-right: 2px solid #777; border-bottom: 2px solid #777; background: #f0f0f0; }
.vbar button, .vbar .thumb { height: 21px; }
.vbar svg { width: 9px; height: 5px; }
.vbar .after, .hbar .after { flex: 1; }
.flat { border-top: 1px solid #9a9aa2; }
.flat button, .flat .thumb { border-width: 1px; border-right-color: #9a9a9a; border-bottom-color: #9a9a9a; }
.flat .before { flex: 122; }
.flat .thumb { flex: 242; }
.flat .after { flex: 258; }
.hbar { width: 673px; border-left: 1px solid #777; }
.hbar button, .hbar .thumb { width: 21px; }
.hbar svg { width: 5px; height: 9px; }
.hbar .before { flex: 274; }
.hbar .after { flex: 337; }

.hsplit { flex: none; height: 9px; padding: 1px 0 0 159px; }
.hsplit button { width: 202px; height: 8px; display: grid; place-items: center; border: 1px solid #8b8d96; border-radius: 2px 2px 0 0; background: linear-gradient(#fff 40%, #b7d3e3 45%, #8ea9ba); }
.hsplit svg { width: 7px; height: 5px; }
.sample { flex: none; height: 160px; border: 1px solid #8b8d96; }
.sample h2 { display: flex; justify-content: center; gap: 64px; margin: 0; height: 19px; border-bottom: 1px solid #d0d0d0; font-size: 15px; font-weight: 400; line-height: 18px; background: linear-gradient(#fff 40%, #f0f1f3 45%, #f3f4f6); }

.vsplit { flex: none; width: 10px; display: flex; align-items: center; padding: 0 2px 0 1px; border-left: 1px solid #c8c8c8; }
.vsplit button { width: 7px; height: 364px; flex: none; display: grid; place-items: center end; border: 1px solid #8b8d96; border-radius: 2px; background: linear-gradient(90deg, #fff 40%, #b7d3e3 50%, #8ea9ba); }
.vsplit svg { width: 5px; height: 8px; }

/* Work area */
.work { flex: 1; min-width: 0; display: flex; flex-direction: column; margin-bottom: 1px; padding: 4px 2px 1px 3px; border: 1px solid #a0a0a0; background: #fff; }
.bars { flex: none; border: 1px solid #a0a0a0; border-bottom: 0; margin-bottom: 1px; background: #ececec; }
.bar { display: flex; align-items: center; height: 24px; padding-left: 4px; border-top: 1px solid #fff; border-bottom: 1px solid #a0a0a0; }
.bar button { width: 26px; display: flex; align-items: center; justify-content: center; white-space: nowrap; }
.bar button svg { flex: none; width: 16px; height: 16px; }
.bar.tight button { width: 25px; }
.bar .drop, .bar.tight .drop { width: 19px; }
.bar .drop svg { width: 9px; height: 5px; }
.bar .pressed { height: 22px; border: 1px solid #a0a0a0; border-right-color: #fff; border-bottom-color: #fff; background: #f8f8f8; }
.grip { width: 3px; height: 18px; margin-right: 3px; border-right: 1px solid #a0a0a0; border-bottom: 1px solid #a0a0a0; }
.dim { color: #999; fill: #999; }
.bar .serif { font: 15px/18px "Liberation Serif", serif; }
.combo { display: flex; align-items: center; height: 21px; padding-right: 6px; border: 1px solid #a0a0a0; color: #999; fill: #999; }
.combo select { flex: 1; min-width: 0; padding-left: 2px; appearance: none; opacity: 1; line-height: 18px; }
.combo .ico { width: 16px; height: 16px; flex: none; margin-left: 2px; fill: #000; }
.combo .arr { width: 9px; height: 5px; flex: none; }
.font { width: 91px; }
.size { width: 59px; }
.zoom { width: 67px; color: #000; fill: #000; background: linear-gradient(90deg, #fff 45px, #f0f0f0 45px); }
.zoom select, .size select { font-family: "Liberation Mono", monospace; font-size: 13px; }
.line { width: 79px; }
.line select { height: 19px; background: linear-gradient(#999, #999) 5px 9px / 52px 1px no-repeat; }
.bar.named { height: 27px; border-top: 0; }
.bar.named button { justify-content: flex-start; gap: 3px; }
.bar.named .drop { justify-content: center; }
.bar .frac { font-size: 13px; width: 14px; white-space: nowrap; }
.frac sub { font-size: 9px; line-height: 9px; }
.bar .sym { font: bold 17px/18px "Liberation Serif", serif; width: 14px; text-align: center; }
.bar .no { font: bold 11px/18px "Liberation Serif", serif; width: 16px; }
.red { color: #e01010; font-family: "Noto Sans CJK SC", sans-serif; font-size: 14px; font-weight: 700; font-style: italic; }
.red.big { font-size: 16px; }
.named .n1 { width: 88px; padding-left: 6px; }
.named .n2 { width: 92px; padding-left: 6px; }
.named .n3 { width: 86px; }
.named .n4 { width: 83px; }
.named .n5 { width: 80px; padding-left: 5px; }
.named .n6 { width: 84px; }
.named .n7 { width: 60px; }

.sheet { flex: 1; min-height: 0; display: grid; grid-template: 1fr 22px / 1fr 21px; border: 1px solid #6a6a6a; border-bottom-width: 2px; background: #f0f0f0; }
.foot { display: flex; min-width: 0; font-size: 12px; }
.pager { display: flex; flex: none; }
.pager button { width: 21px; display: grid; place-items: center; border: 1px solid #a0a0a0; border-left-color: #fff; background: #f0f0f0; }
.pager svg { width: 9px; height: 9px; }
.sheettabs { flex: 1; display: flex; min-width: 0; border-top: 1px solid #a0a0a0; margin-right: 5px; border-right: 1px solid #fff; }
.sheettabs svg { flex: none; width: 10px; height: 21px; margin-top: -1px; }
.sheettabs button { padding: 0 5px; white-space: nowrap; }
.sheettabs .on { background: #fff; }
.corner svg { width: 9px; height: 9px; }

/* Floating page handle over the right edge */
.floatbar { position: absolute; right: 1px; top: 725px; width: 8px; height: 57px; border-radius: 4px; background: linear-gradient(transparent 48px, #4fd37a 48px 49px, transparent 49px 50px, #4fd37a 50px 51px, transparent 51px 52px, #4fd37a 52px 53px, transparent 53px), #555; }

/* Status bar */
footer { display: flex; flex: none; height: 17px; gap: 3px; padding-top: 1px; overflow: hidden; border-top: 1px solid #c0c0c0; line-height: 20px; white-space: nowrap; }
footer div { flex: none; height: 24px; border: 1px solid #a0a0a0; border-right-color: #c0c0c0; }
footer code { line-height: 18px; }
.s1 { width: 345px; }
.s2 { width: 157px; padding-left: 2px; }
.s3 { width: 122px; }
footer .s4 { flex: 1; padding-left: 509px; font-size: 13px; color: #3c9ceb; }
.s5 { width: 245px; text-align: right; }
```
